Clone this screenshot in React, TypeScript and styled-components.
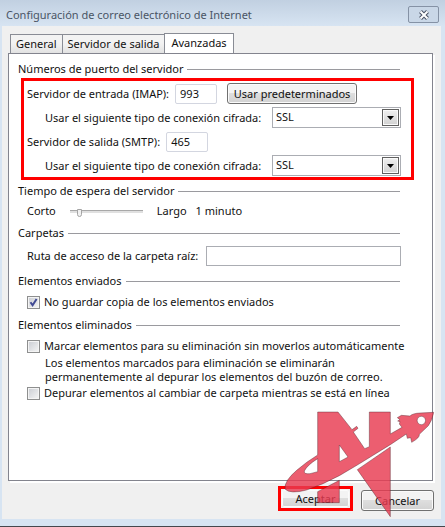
import React, { useState } from "react";
import styled, { createGlobalStyle } from "styled-components";

const GlobalStyle = createGlobalStyle`
  *, *::before, *::after { box-sizing: border-box; }
  body {
    margin: 0;
    background: #d7e4f2;
    color: #111;
    font: 11px/14px "Noto Sans", "Open Sans", sans-serif;
  }
  button, input, select { font: inherit; color: inherit; margin: 0; }
`;

const Dialog = styled.div`
  position: relative;
  display: flex;
  flex-direction: column;
  min-height: 100vh;
  padding: 0 4px 7px 2px;
  border-bottom: 1px solid #45474d;
  background: linear-gradient(#c1d0e1, #d7e4f2 26px);
`;

const TitleBar = styled.header`
  display: flex;
  align-items: center;
  justify-content: space-between;
  height: 26px;
  padding: 3px 2px 0 4px;
`;

const Title = styled.h1`
  margin: 0;
  font-size: 11px;
  line-height: 16px;
  font-weight: 400;
  color: #4a5565;
`;

const CloseButton = styled.button`
  display: grid;
  place-items: center;
  width: 31px;
  height: 17px;
  padding: 0;
  border: 1px solid #8592a5;
  border-radius: 2px;
  background: #c9d7e7;
`;

const Body = styled.main`
  flex: 1;
  display: flex;
  flex-direction: column;
  padding: 7px 8px 8px 6px;
  background: #f0f0f0;
`;

const Tabs = styled.div`
  display: flex;
  align-items: flex-end;
  padding-left: 2px;
`;

const Tab = styled.button<{ $active?: boolean }>`
  height: ${(p) => (p.$active ? 21 : 19)}px;
  margin-bottom: ${(p) => (p.$active ? -1 : 0)}px;
  padding: ${(p) => (p.$active ? "0 6px 2px" : "0 5px")};
  border: 1px solid #898c95;
  border-bottom-width: 0;
  background: ${(p) => (p.$active ? "#fff" : "linear-gradient(#f3f3f3 45%, #e2e2e2)")};
  white-space: nowrap;
  & + & { margin-left: -1px; }
`;

const Panel = styled.section`
  flex: 1;
  padding: 8px 32px 8px 9px;
  border: 1px solid #83848e;
  background: #fff;
  box-shadow: 2px 2px 0 #fff;
`;

const Heading = styled.h2`
  display: flex;
  align-items: center;
  gap: 4px;
  margin: 0;
  font-size: 11px;
  line-height: 14px;
  font-weight: 400;
  white-space: nowrap;
  &::after {
    content: "";
    flex: 1;
    height: 1px;
    background: #9a9a9f;
  }
`;

const Highlight = styled.div`
  display: flex;
  flex-direction: column;
  gap: 3px;
  margin: 2px -14px 4px 3px;
  padding: 2px 10px 1px 3px;
  border: 3px solid #f00;
`;

const Row = styled.div<{ $indent?: boolean }>`
  display: flex;
  align-items: center;
  min-height: 21px;
  padding-left: ${(p) => (p.$indent ? 18 : 0)}px;
  white-space: nowrap;
`;

const PortInput = styled.input`
  width: 42px;
  height: 20px;
  margin: 0 10px 0 6px;
  padding: 0 4px;
  border: 1px solid #d3d6e0;
  border-radius: 2px;
  background: #fff;
`;

const Button = styled.button<{ $wide?: boolean }>`
  width: ${(p) => (p.$wide ? 130 : 73)}px;
  height: 21px;
  padding: 0;
  border: 1px solid #707070;
  border-radius: 3px;
  background: linear-gradient(#f3f3f3 45%, #dedede 50%, #d2d2d2);
  box-shadow: inset 0 0 0 1px #fbfbfb;
`;

const SelectBox = styled.span`
  position: relative;
  flex: 0 0 129px;
  margin-left: auto;
`;

const Select = styled.select`
  display: block;
  appearance: none;
  width: 100%;
  height: 21px;
  padding: 0 20px 2px 3px;
  border: 1px solid #abadb3;
  border-radius: 0;
  background: #fff;
`;

const Arrow = styled.span`
  position: absolute;
  top: 2px;
  right: 2px;
  display: grid;
  place-items: center;
  width: 17px;
  height: 17px;
  border: 1px solid #606060;
  box-shadow: inset 0 0 0 1px #fafafa;
  background: linear-gradient(#efefef, #d2d2d2);
  pointer-events: none;
`;

const SliderRow = styled.div`
  display: flex;
  align-items: center;
  gap: 9px;
  margin: 6px 0 8px;
  padding-left: 9px;
`;

const Slider = styled.input`
  appearance: none;
  width: 73px;
  height: 12px;
  margin: 0 5px;
  background: transparent;
  &::-webkit-slider-runnable-track {
    height: 3px;
    border-top: 1px solid #a8a8a8;
    border-bottom: 1px solid #e0e0e0;
    background: #e0e0e0;
  }
  &::-webkit-slider-thumb {
    appearance: none;
    width: 5px;
    height: 8px;
    margin-top: -2px;
    border: 1px solid #a4a4a4;
    border-radius: 0 0 3px 3px;
    background: #f1f1f1;
  }
`;

const FolderRow = styled.div`
  display: flex;
  align-items: center;
  gap: 8px;
  margin: 6px -1px 8px 0;
  padding-left: 9px;
  white-space: nowrap;
`;

const FolderInput = styled.input`
  flex: 1;
  min-width: 0;
  height: 20px;
  padding: 0 4px;
  border: 1px solid #abadb3;
  background: #fff;
`;

const Check = styled.label`
  display: flex;
  align-items: center;
  gap: 4px;
  padding-left: 9px;
  white-space: nowrap;
`;

const CheckInput = styled.input`
  appearance: none;
  flex: none;
  width: 13px;
  height: 13px;
  border: 1px solid #8e8f8f;
  background: linear-gradient(135deg, #c9ccd2, #f6f6f6);
  box-shadow: inset 0 0 0 1px #f4f4f4;
  &:checked {
    background:
      url("data:image/svg+xml,%3Csvg xmlns='http://www.w3.org/2000/svg' viewBox='0 0 11 11'%3E%3Cpath d='M2.5 5.2 4.6 8.3 8.6 2' fill='none' stroke='%23414a94' stroke-width='2'/%3E%3C/svg%3E"),
      linear-gradient(135deg, #c9ccd2, #f6f6f6);
  }
`;

const CheckGroup = styled.div`
  margin: 7px 0 9px;
`;

const Note = styled.p`
  margin: 3px 0 2px;
  padding-left: 27px;
`;

const Footer = styled.footer`
  display: flex;
  justify-content: flex-end;
  align-items: flex-end;
  gap: 8px;
  padding-top: 5px;
  margin-right: -1px;
`;

const Emphasis = styled.span`
  display: flex;
  border: 3px solid #f00;
  & > button { width: 69px; height: 19px; border-color: #f3f3f3; }
`;

const Logo = styled.svg`
  position: absolute;
  right: 0;
  bottom: -1px;
  width: 175px;
  height: 130px;
  pointer-events: none;
`;

function EncryptionRow({ id }: { id: string }) {
  return (
    <Row $indent>
      <label htmlFor={id}>Usar el siguiente tipo de conexión cifrada:</label>
      <SelectBox>
        <Select id={id} defaultValue="SSL">
          <option>SSL</option>
          <option>TLS</option>
        </Select>
        <Arrow>
          <svg width="7" height="4" viewBox="0 0 7 4"><path d="M0 0h7L3.5 4z" fill="#000" /></svg>
        </Arrow>
      </SelectBox>
    </Row>
  );
}

export default function App() {
  const [tab, setTab] = useState("Avanzadas");
  return (
    <>
      <GlobalStyle />
      <Dialog>
        <TitleBar>
          <Title>Configuración de correo electrónico de Internet</Title>
          <CloseButton aria-label="Cerrar">
            <svg width="12" height="10" viewBox="0 0 12 10">
              <path d="M2.5 1.5 9.5 8.5M9.5 1.5 2.5 8.5" stroke="#4b5365" strokeWidth="4" />
              <path d="M2.5 1.5 9.5 8.5M9.5 1.5 2.5 8.5" stroke="#fff" strokeWidth="2" />
            </svg>
          </CloseButton>
        </TitleBar>
        <Body>
          <Tabs role="tablist">
            {["General", "Servidor de salida", "Avanzadas"].map((name) => (
              <Tab key={name} role="tab" aria-selected={tab === name} $active={tab === name} onClick={() => setTab(name)}>
                {name}
              </Tab>
            ))}
          </Tabs>
          <Panel>
            <Heading>Números de puerto del servidor</Heading>
            <Highlight>
              <Row>
                <label htmlFor="imap">Servidor de entrada (IMAP):</label>
                <PortInput id="imap" defaultValue="993" />
                <Button $wide>Usar predeterminados</Button>
              </Row>
              <EncryptionRow id="imap-enc" />
              <Row>
                <label htmlFor="smtp">Servidor de salida (SMTP):</label>
                <PortInput id="smtp" defaultValue="465" />
              </Row>
              <EncryptionRow id="smtp-enc" />
            </Highlight>
            <Heading>Tiempo de espera del servidor</Heading>
            <SliderRow>
              <label htmlFor="timeout">Corto</label>
              <Slider id="timeout" type="range" min="0" max="10" defaultValue="1" />
              <span>Largo</span>
              <output htmlFor="timeout">1 minuto</output>
            </SliderRow>
            <Heading>Carpetas</Heading>
            <FolderRow>
              <label htmlFor="root-path">Ruta de acceso de la carpeta raíz:</label>
              <FolderInput id="root-path" />
            </FolderRow>
            <Heading>Elementos enviados</Heading>
            <CheckGroup>
              <Check>
                <CheckInput type="checkbox" defaultChecked />
                No guardar copia de los elementos enviados
              </Check>
            </CheckGroup>
            <Heading>Elementos eliminados</Heading>
            <CheckGroup>
              <Check>
                <CheckInput type="checkbox" />
                Marcar elementos para su eliminación sin moverlos automáticamente
              </Check>
              <Note>
                Los elementos marcados para eliminación se eliminarán
                <br />
                permanentemente al depurar los elementos del buzón de correo.
              </Note>
              <Check>
                <CheckInput type="checkbox" />
                Depurar elementos al cambiar de carpeta mientras se está en línea
              </Check>
            </CheckGroup>
          </Panel>
          <Footer>
            <Emphasis><Button>Aceptar</Button></Emphasis>
            <Button>Cancelar</Button>
          </Footer>
        </Body>
        <Logo viewBox="0 0 525 390" aria-hidden="true">
          <g fill="#e83a50" fillOpacity="0.82" stroke="#4a2028" strokeOpacity="0.6" strokeWidth="2" strokeLinejoin="round">
            <path
              fillRule="evenodd"
              d="M143 45H204L246 98 260 88 264 94 250 105 284 155 298 149V45H361V111L396 91 388 81 390 74 383 72 390 68 382 62 394 55 420 57Q428 49 450 48L491 46Q488 68 475 86L448 112Q450 122 425 136L422 122 412 124 409 111 361 143L262 204 208 236Q160 262 110 279Q60 292 45 276Q42 252 80 220Q110 194 143 174ZM143 185Q112 204 103 222Q101 232 120 230L143 224ZM208 144V194L234 180ZM454 58A12 12 0 1 0 454 83A12 12 0 1 0 454 58Z"
            />
            <path d="M361 150V359L262 218Z" />
            <path d="M143 284 208 250V317H143Z" />
          </g>
        </Logo>
      </Dialog>
    </>
  );
}
